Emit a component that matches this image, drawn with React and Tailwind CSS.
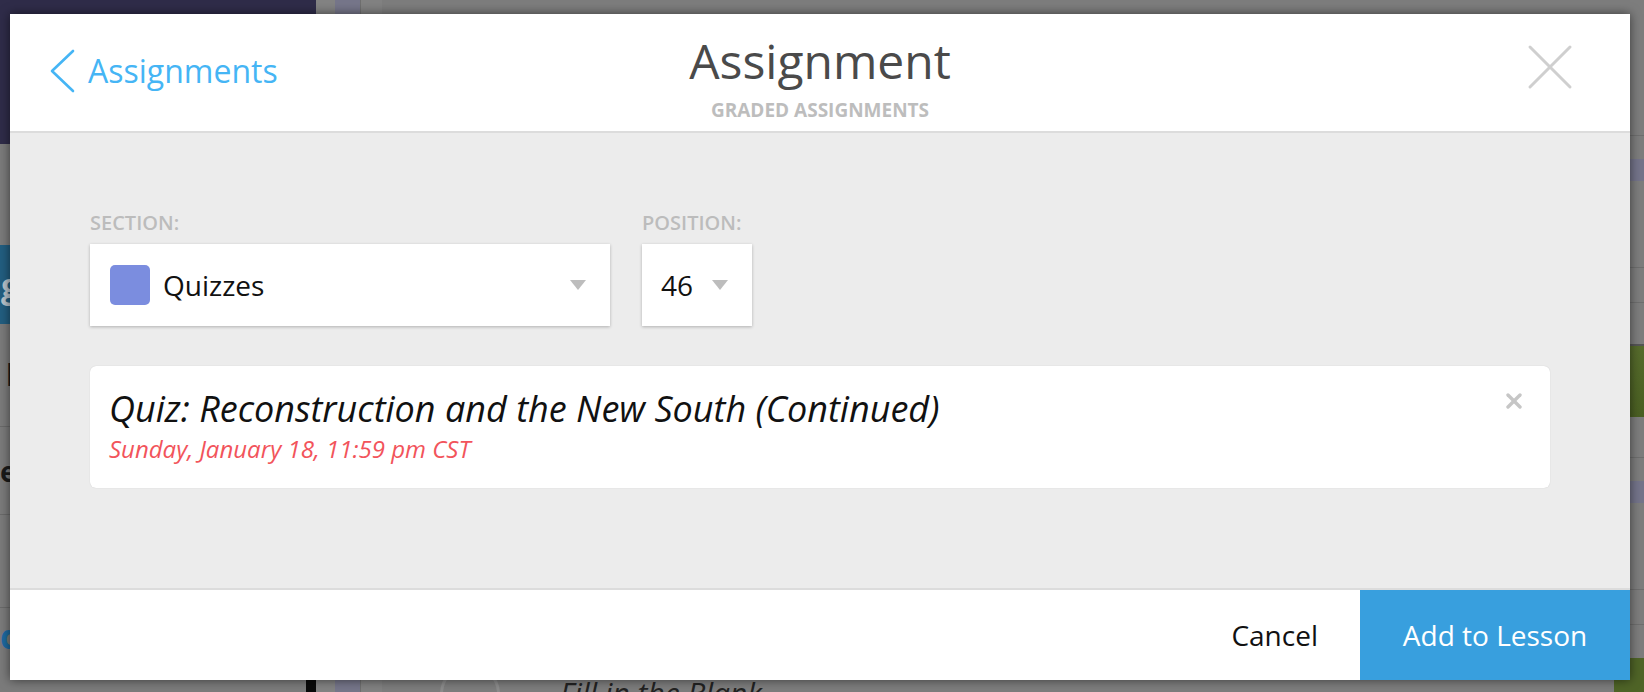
import React from "react";

function Chevron() {
  return (
    <svg width="26" height="44" viewBox="0 0 26 44" className="shrink-0">
      <polyline points="24,2 3,22 24,42" fill="none" stroke="#45b5f5" strokeWidth="2.6" strokeLinecap="round" strokeLinejoin="round" />
    </svg>
  );
}

function CloseBig() {
  return (
    <svg width="46" height="46" viewBox="0 0 46 46">
      <line x1="3" y1="3" x2="43" y2="43" stroke="#cfcfcf" strokeWidth="3" strokeLinecap="round" />
      <line x1="43" y1="3" x2="3" y2="43" stroke="#cfcfcf" strokeWidth="3" strokeLinecap="round" />
    </svg>
  );
}

function CloseSmall() {
  return (
    <svg width="16" height="16" viewBox="0 0 16 16">
      <line x1="2" y1="2" x2="14" y2="14" stroke="#c6c6c6" strokeWidth="3.4" strokeLinecap="round" />
      <line x1="14" y1="2" x2="2" y2="14" stroke="#c6c6c6" strokeWidth="3.4" strokeLinecap="round" />
    </svg>
  );
}

function Caret() {
  return (
    <svg width="16" height="10" viewBox="0 0 16 10" className="shrink-0">
      <polygon points="0,0 16,0 8,10" fill="#bdbdbd" />
    </svg>
  );
}

function RightStrip() {
  return (
    <div className="w-[30px] shrink-0 flex flex-col bg-[#7d7d7d]">
      <div className="h-[135px]" />
      <div className="h-px bg-[#6e6e6e]" />
      <div className="h-[23px]" />
      <div className="h-[22px] bg-[#74748a]" />
      <div className="h-[86px]" />
      <div className="h-px bg-[#6e6e6e]" />
      <div className="h-[34px]" />
      <div className="h-px bg-[#6e6e6e]" />
      <div className="h-[41px]" />
      <div className="h-[2px] bg-[#555]" />
      <div className="h-[71px] bg-gradient-to-b from-[#566b2c] to-[#4a5f22]" />
      <div className="h-[40px]" />
      <div className="h-px bg-[#6e6e6e]" />
      <div className="h-[23px]" />
      <div className="h-[22px] bg-[#74748a]" />
      <div className="h-[86px]" />
      <div className="h-px bg-[#6e6e6e]" />
      <div className="h-[34px]" />
      <div className="h-px bg-[#6e6e6e]" />
      <div className="h-[33px]" />
      <div className="h-[34px] bg-[#4f6427]" />
    </div>
  );
}

function Sidebar() {
  return (
    <div className="w-[316px] shrink-0 flex flex-col bg-[#7b7b7b] overflow-hidden">
      <div className="h-[144px] bg-[#2f2c49] shrink-0" />
      <div className="h-[101px] shrink-0" />
      <div className="h-[79px] shrink-0 bg-[#225e80] flex items-center pl-[1px]">
        <span className="text-[34px] font-bold leading-none text-[#b8c4cc]">g</span>
      </div>
      <div className="h-[102px] shrink-0 flex items-center pl-[6px]">
        <span className="text-[30px] font-bold text-[#1a1a1a] leading-none">l</span>
      </div>
      <div className="h-px bg-[#6a6a6a] shrink-0" />
      <div className="h-[87px] shrink-0 flex items-center">
        <span className="text-[28px] font-bold text-[#1a1a1a] leading-none">es</span>
      </div>
      <div className="h-px bg-[#6a6a6a] shrink-0" />
      <div className="h-[92px] shrink-0" />
      <div className="h-px bg-[#6a6a6a] shrink-0" />
      <div className="h-[55px] shrink-0 flex items-center">
        <span className="text-[34px] font-bold text-[#1e6aa0] leading-none">d</span>
      </div>
      <div className="flex-1 flex justify-end">
        <div className="w-[10px] bg-[#0a0a0a]" />
      </div>
    </div>
  );
}

export default function App() {
  return (
    <div className="relative w-[1644px] h-[692px] overflow-hidden flex bg-[#7d7d7d]" style={{ fontFamily: '"Open Sans", "Noto Sans", sans-serif' }}>
      <Sidebar />
      <div className="w-[19px] shrink-0 bg-[#838383]" />
      <div className="w-[25px] shrink-0 bg-[#76768a]" />
      <div className="w-[22px] shrink-0 bg-[#828282] border-l border-[#6f6f6f]" />
      <div className="flex-1 flex flex-col">
        <div className="h-[664px] shrink-0" />
        <div className="flex items-start gap-[60px] pl-[58px]">
          <div className="w-[60px] h-[60px] rounded-full border-[3px] border-[#8c8c8c]" />
          <span className="italic text-[30px] text-[#222] leading-none mt-[14px]">Fill in the Blank</span>
        </div>
      </div>
      <RightStrip />

      {/* Modal */}
      <div className="absolute left-[10px] top-[14px] w-[1620px] h-[666px] flex flex-col bg-white shadow-[0_0_10px_rgba(0,0,0,0.55)]">
        {/* Header */}
        <div className="h-[119px] shrink-0 border-b-2 border-[#dcdcdc] grid grid-cols-[1fr_auto_1fr]">
          <div className="flex items-start pl-[39px] pt-[35px]">
            <div className="flex items-center gap-[13px]">
              <Chevron />
              <span className="text-[32px] leading-none text-[#45b5f5]">Assignments</span>
            </div>
          </div>
          <div className="flex flex-col items-center pt-[18px]">
            <div className="text-[48px] leading-[1.2] text-[#4a4a4a]">Assignment</div>
            <div className="mt-[9px] text-[19px] leading-[1.2] font-bold text-[#bdbdbd]">GRADED ASSIGNMENTS</div>
          </div>
          <div className="flex justify-end items-start pr-[57px] pt-[30px]">
            <CloseBig />
          </div>
        </div>

        {/* Body */}
        <div className="flex-1 bg-[#ececec] border-b-2 border-[#dcdcdc] pl-[80px] pr-[80px] pt-[78px]">
          <div className="flex gap-[32px]">
            <div className="flex flex-col">
              <div className="text-[20px] leading-[1.2] font-semibold text-[#bcbcbc]">SECTION:</div>
              <div className="mt-[9px] w-[520px] h-[82px] bg-white shadow-[0_1px_3px_rgba(0,0,0,0.25)] flex items-center pl-[20px] pr-[24px]">
                <div className="w-[40px] h-[40px] rounded-[5px] bg-[#7b8ddf] shrink-0" />
                <span className="ml-[13px] text-[28px] leading-none text-[#111]">Quizzes</span>
                <div className="flex-1" />
                <Caret />
              </div>
            </div>
            <div className="flex flex-col">
              <div className="text-[20px] leading-[1.2] font-semibold text-[#bcbcbc]">POSITION:</div>
              <div className="mt-[9px] w-[110px] h-[82px] bg-white shadow-[0_1px_3px_rgba(0,0,0,0.25)] flex items-center pl-[19px] pr-[24px]">
                <span className="text-[28px] leading-none text-[#111]">46</span>
                <div className="flex-1" />
                <Caret />
              </div>
            </div>
          </div>

          <div className="mt-[40px] h-[122px] bg-white rounded-[6px] shadow-[0_0_1px_rgba(0,0,0,0.2)] flex items-start pl-[19px] pr-[28px]">
            <div className="flex-1 flex flex-col pt-[21px]">
              <div className="italic text-[36px] leading-[1.2] text-[#111]">Quiz: Reconstruction and the New South (Continued)</div>
              <div className="mt-[5px] italic text-[24px] leading-[1.2] text-[#f2545b]">Sunday, January 18, 11:59 pm CST</div>
            </div>
            <div className="pt-[27px]">
              <CloseSmall />
            </div>
          </div>
        </div>

        {/* Footer */}
        <div className="h-[90px] shrink-0 flex items-stretch justify-end">
          <div className="flex items-center pr-[42px]">
            <span className="text-[28px] leading-none text-[#111]">Cancel</span>
          </div>
          <div className="w-[270px] bg-[#389fde] flex items-center justify-center">
            <span className="text-[28px] leading-none text-white">Add to Lesson</span>
          </div>
        </div>
      </div>
    </div>
  );
}
